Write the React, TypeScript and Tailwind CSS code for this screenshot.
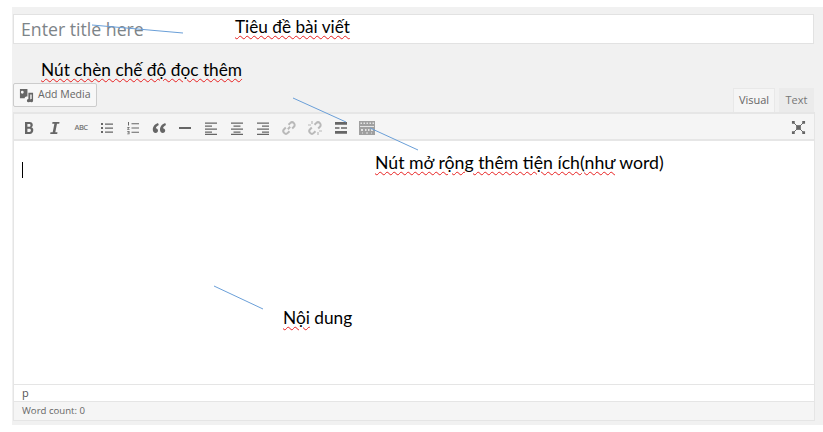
const openSans = "font-['Open_Sans',sans-serif]";

const Wavy = ({ children }: { children: string }) => (
  <span className="underline decoration-wavy decoration-[#e82020] decoration-1 underline-offset-2">{children}</span>
);

const Note = ({ className, children }: { className: string; children: React.ReactNode }) => (
  <div className={`absolute whitespace-nowrap font-['Lato',sans-serif] leading-[22px] text-black ${className}`}>
    {children}
  </div>
);

const Svg = ({ children, className = "text-[#666]" }: { children: React.ReactNode; className?: string }) => (
  <svg viewBox="0 0 16 16" className={`h-4 w-4 ${className}`} fill="currentColor">
    {children}
  </svg>
);

const tools = [
  <Svg key="b"><path d="M4 2h4.600c2 0 3.200 1 3.200 2.900 0 1.200-.6 2-1.600 2.400 1.300.3 2.100 1.300 2.100 2.800C12.300 12.500 11 14 8.700 14H4zm2.400 2v2.800h1.800c.9 0 1.300-.5 1.300-1.400S9.100 4 8.200 4zm0 4.700V12h2c1 0 1.500-.6 1.500-1.700S9.400 8.700 8.400 8.700z" /></Svg>,
  <Svg key="i"><path d="M5.500 2h7l-.3 1.800h-2.200L8.300 12.200h2.200L10.200 14h-7l.3-1.800h2.200l1.700-8.400H5.200z" /></Svg>,
  <span key="abc" className="text-[7.500px] font-semibold leading-none tracking-[-0.5px] text-[#777]">ABC</span>,
  <Svg key="ul"><path d="M2 3h2v2H2zm4 .5h8v1.200H6zM2 7h2v2H2zm4 .5h8v1.200H6zM2 11h2v2H2zm4 .5h8v1.200H6z" /></Svg>,
  <Svg key="ol"><path d="M3 2h1v3.500H3zM2.200 7h2.300v.8L3.200 9h1.300v.7H2.200V9l1.300-1.300H2.200zM2.200 11h2.300v3.200H2.200v-.6h1.500v-.7H2.600v-.5h1.100v-.7H2.200zM6.500 3.300H14v1H6.500zM6.500 7.500H14v1H6.500zM6.500 11.800H14v1H6.500z" /></Svg>,
  <Svg key="q"><path d="M7 3C4.300 4.100 1.800 6 1.800 9.500c0 2 1.100 3.500 2.800 3.500 1.400 0 2.400-1.100 2.400-2.400S6 8.300 4.800 8.300c.3-1.300 1.300-2.200 3-3.200zM14.200 3C11.500 4.100 9 6 9 9.500c0 2 1.100 3.500 2.800 3.500 1.400 0 2.400-1.100 2.400-2.400s-1-2.300-2.200-2.300c.3-1.300 1.300-2.200 3-3.200z" /></Svg>,
  <Svg key="hr"><path d="M2 7h12v2H2z" /></Svg>,
  <Svg key="al"><path d="M2 2.500h12v1.200H2zM2 5.500h7v1.200H2zM2 8.500h12v1.200H2zM2 11.500h7v1.200H2zM2 13.800h12V15H2z" /></Svg>,
  <Svg key="ac"><path d="M2 2.500h12v1.200H2zM4.500 5.500h7v1.200h-7zM2 8.500h12v1.200H2zM4.500 11.500h7v1.200h-7zM2 13.800h12V15H2z" /></Svg>,
  <Svg key="ar"><path d="M2 2.500h12v1.200H2zM7 5.500h7v1.200H7zM2 8.500h12v1.200H2zM7 11.500h7v1.200H7zM2 13.800h12V15H2z" /></Svg>,
  <Svg key="link" className="text-[#b9b9b9]">
    <path fill="none" stroke="currentColor" strokeWidth="2" d="M6.800 9.200 9.200 6.800M7.500 4.800l1.700-1.700a2.600 2.600 0 0 1 3.700 3.700l-1.700 1.700M8.500 11.200l-1.700 1.700a2.600 2.600 0 0 1-3.700-3.700l1.700-1.700" />
  </Svg>,
  <Svg key="unlink" className="text-[#b9b9b9]">
    <path fill="none" stroke="currentColor" strokeWidth="2" d="M7.500 4.800l1.700-1.700a2.600 2.600 0 0 1 3.700 3.700l-1.700 1.700M8.500 11.200l-1.700 1.700a2.600 2.600 0 0 1-3.700-3.700l1.700-1.700" />
    <path fill="none" stroke="currentColor" strokeWidth="1.200" d="M5 1v3M1 5h3M11 15v-3M15 11h-3" />
  </Svg>,
  <Svg key="more"><path d="M2 2h12v2.800H2zM2 7.300h4.500v1.400H2zM8 7.300h6v1.400H8zM2 11h12v2.800H2z" /></Svg>,
  <svg key="kitchen" viewBox="0 0 16 14" className="h-[14px] w-4" fill="#a0a0a0">
    <path d="M0 0h16v14H0z" />
    <path fill="#e4e4e4" d="M1.500 1.500h1.500v1.500H1.500zm3 0H6v1.500H4.500zm3 0H9v1.500H7.500zm3 0H12v1.500h-1.500zm3 0H15v1.500h-1.500zM1 5h14v1H1zM2 8h2v2H2zm4 0h1.500v2H6zm3 0h1.500v2H9zm3 0h2v2h-2zM3 11.500h1v1H3zm4 0h2v1H7zm5 0h1v1h-1z" />
  </svg>,
];

export default function App() {
  return (
    <div className={`relative h-[432px] w-[823px] overflow-hidden bg-white pl-3 ${openSans}`}>
      <div className="h-[418px] translate-y-[7px] bg-[#f1f1f1] pl-px pt-[7px]">
        <div className="flex h-[30px] w-[801px] items-center border border-[#e2e2e2] bg-white pl-[7px] text-[17.700px] text-[#7d8488]">
          Enter title here
        </div>

        <div className="mt-[38px] flex h-[30px] w-[802px] items-end justify-between">
          <button className="mb-[5px] flex h-6 w-[84px] items-center gap-1 rounded-[2px] border border-[#cccccc] bg-[#f7f7f7] pl-[5px] text-[10.500px] text-[#666]">
            <svg viewBox="0 0 16 16" className="h-[15px] w-[15px] text-[#666]" fill="currentColor">
              <path d="M1 1h8v8H7.500A2 2 0 0 0 6 11H1zm2.500 2a1.500 1.500 0 1 0 0 3 1.500 1.500 0 0 0 0-3zM10 5h5v8.500a1.800 1.800 0 1 1-1.500-1.800V7H12v6.500a1.800 1.800 0 1 1-2-1.800z" />
            </svg>
            Add Media
          </button>
          <div className="flex items-end gap-1 pr-px text-[11px] text-[#666]">
            <div className="flex h-6 w-[42px] items-center justify-center border border-b-0 border-[#e8e8e8] bg-[#f5f5f5]">Visual</div>
            <div className="flex h-6 w-[35px] items-center justify-center bg-[#ebebeb] text-[#777]">Text</div>
          </div>
        </div>

        <div className="w-[802px] border-x border-[#e5e5e5] bg-white">
          <div className="flex h-[29px] items-center justify-between border-y-2 border-[#e6e6e6] bg-[#f5f5f5] pl-[2px] pr-[8px] pt-[2px]">
            <div className="flex">
              {tools.map((tool) => (
                <div key={tool.key} className="flex h-[22px] w-[26px] items-center justify-center">
                  {tool}
                </div>
              ))}
            </div>
            <svg viewBox="0 0 16 16" className="h-[15px] w-[15px] text-[#666]" fill="currentColor">
              <path d="M5.500 5.500h5v5h-5z" />
              <path fill="none" stroke="currentColor" strokeWidth="1" d="M2.500 2.500l11 11M13.500 2.500l-11 11" />
              <path d="M1 1h3v3H1zM12 1h3v3h-3zM1 12h3v3H1zM12 12h3v3h-3z" />
            </svg>
          </div>
          <div className="h-[243px] pl-2 pt-[21px]">
            <div className="h-4 w-px bg-black" />
          </div>
          <div className="flex h-[18px] items-center border-y border-[#e5e5e5] pl-2 text-[11px] text-[#555]">p</div>
          <div className="flex h-[19px] items-center border-b border-[#e5e5e5] bg-[#f5f5f5] pl-2 text-[9.600px] text-[#666]">
            Word count: 0
          </div>
        </div>
      </div>

      <svg className="absolute left-0 top-0 h-[432px] w-[823px]" fill="none" stroke="#6a9fd8" strokeWidth="1">
        <path d="M92 25 183 33M293 98 346 122M370 128 418 150M214 286 263 309" />
      </svg>

      <Note className="left-[235px] top-[16px] text-[17.200px]"><Wavy>Tiêu đề bài viết</Wavy></Note>
      <Note className="left-[41px] top-[59px] text-[17.300px]"><Wavy>Nút chèn chế độ đọc thêm</Wavy></Note>
      <Note className="left-[375px] top-[152px] text-[17.700px]"><Wavy>Nút mở rộng thêm tiện ích(như</Wavy> word)</Note>
      <Note className="left-[283px] top-[307px] text-[17.300px]"><Wavy>Nội</Wavy> dung</Note>
    </div>
  );
}
